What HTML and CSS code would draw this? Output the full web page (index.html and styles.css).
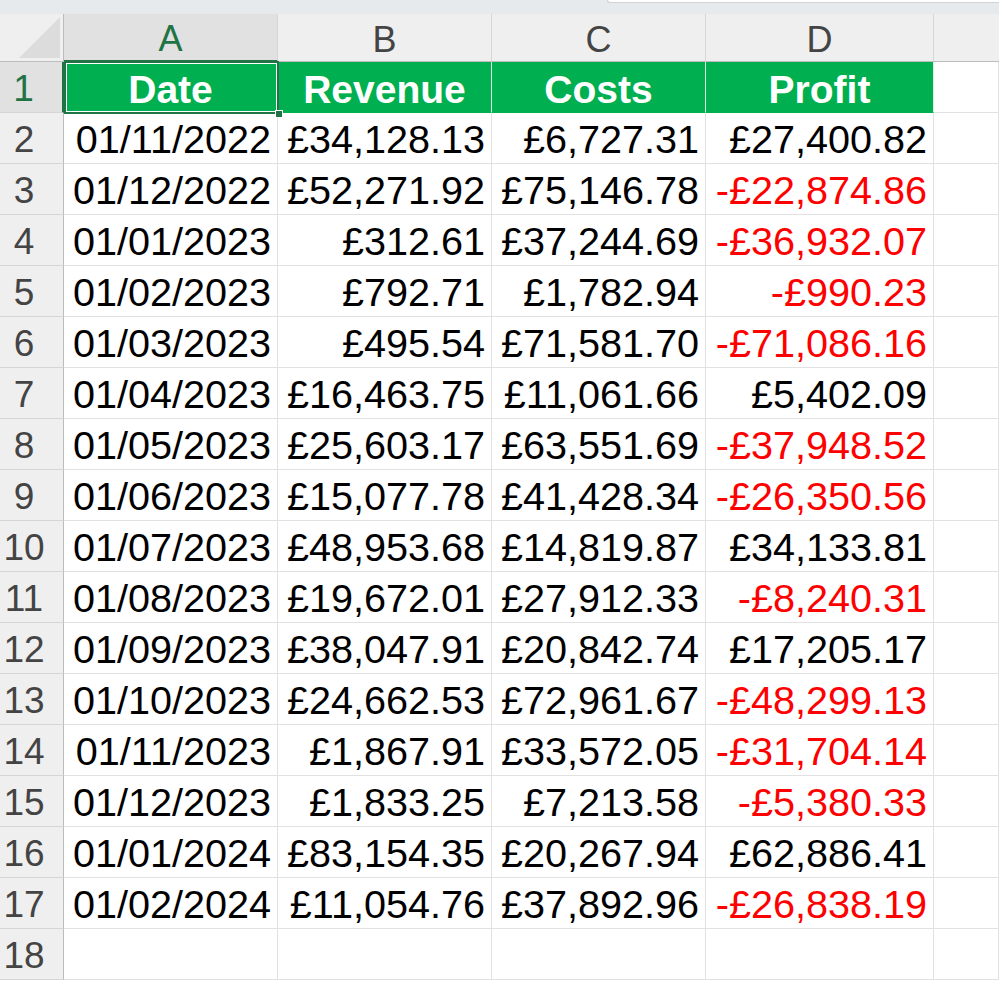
FILE: index.html
```html
<!DOCTYPE html>
<html>
<head>
<meta charset="utf-8">
<link rel="stylesheet" href="styles.css">
</head>
<body>
<div class="topbar"><div class="spacer"></div><div class="tab"></div></div>
<div class="sheet">
  <div class="corner"><div class="tri"></div></div>
  <div class="colh sel">A</div>
  <div class="colh">B</div>
  <div class="colh">C</div>
  <div class="colh">D</div>
  <div class="colh last"></div>

  <div class="rowh sel">1</div>
  <div class="cell hd">Date</div>
  <div class="cell hd">Revenue</div>
  <div class="cell hd">Costs</div>
  <div class="cell hd">Profit</div>
  <div class="cell"></div>

  <div class="rowh">2</div><div class="cell">01/11/2022</div><div class="cell">£34,128.13</div><div class="cell">£6,727.31</div><div class="cell">£27,400.82</div><div class="cell"></div>
  <div class="rowh">3</div><div class="cell">01/12/2022</div><div class="cell">£52,271.92</div><div class="cell">£75,146.78</div><div class="cell neg">-£22,874.86</div><div class="cell"></div>
  <div class="rowh">4</div><div class="cell">01/01/2023</div><div class="cell">£312.61</div><div class="cell">£37,244.69</div><div class="cell neg">-£36,932.07</div><div class="cell"></div>
  <div class="rowh">5</div><div class="cell">01/02/2023</div><div class="cell">£792.71</div><div class="cell">£1,782.94</div><div class="cell neg">-£990.23</div><div class="cell"></div>
  <div class="rowh">6</div><div class="cell">01/03/2023</div><div class="cell">£495.54</div><div class="cell">£71,581.70</div><div class="cell neg">-£71,086.16</div><div class="cell"></div>
  <div class="rowh">7</div><div class="cell">01/04/2023</div><div class="cell">£16,463.75</div><div class="cell">£11,061.66</div><div class="cell">£5,402.09</div><div class="cell"></div>
  <div class="rowh">8</div><div class="cell">01/05/2023</div><div class="cell">£25,603.17</div><div class="cell">£63,551.69</div><div class="cell neg">-£37,948.52</div><div class="cell"></div>
  <div class="rowh">9</div><div class="cell">01/06/2023</div><div class="cell">£15,077.78</div><div class="cell">£41,428.34</div><div class="cell neg">-£26,350.56</div><div class="cell"></div>
  <div class="rowh">10</div><div class="cell">01/07/2023</div><div class="cell">£48,953.68</div><div class="cell">£14,819.87</div><div class="cell">£34,133.81</div><div class="cell"></div>
  <div class="rowh">11</div><div class="cell">01/08/2023</div><div class="cell">£19,672.01</div><div class="cell">£27,912.33</div><div class="cell neg">-£8,240.31</div><div class="cell"></div>
  <div class="rowh">12</div><div class="cell">01/09/2023</div><div class="cell">£38,047.91</div><div class="cell">£20,842.74</div><div class="cell">£17,205.17</div><div class="cell"></div>
  <div class="rowh">13</div><div class="cell">01/10/2023</div><div class="cell">£24,662.53</div><div class="cell">£72,961.67</div><div class="cell neg">-£48,299.13</div><div class="cell"></div>
  <div class="rowh">14</div><div class="cell">01/11/2023</div><div class="cell">£1,867.91</div><div class="cell">£33,572.05</div><div class="cell neg">-£31,704.14</div><div class="cell"></div>
  <div class="rowh">15</div><div class="cell">01/12/2023</div><div class="cell">£1,833.25</div><div class="cell">£7,213.58</div><div class="cell neg">-£5,380.33</div><div class="cell"></div>
  <div class="rowh">16</div><div class="cell">01/01/2024</div><div class="cell">£83,154.35</div><div class="cell">£20,267.94</div><div class="cell">£62,886.41</div><div class="cell"></div>
  <div class="rowh">17</div><div class="cell">01/02/2024</div><div class="cell">£11,054.76</div><div class="cell">£37,892.96</div><div class="cell neg">-£26,838.19</div><div class="cell"></div>
  <div class="rowh">18</div><div class="cell"></div><div class="cell"></div><div class="cell"></div><div class="cell"></div><div class="cell"></div>

  <div class="selbox"><div class="handle"></div></div>
</div>
</body>
</html>
```
FILE: styles.css
```css
* { box-sizing: border-box; }
html, body { margin: 0; padding: 0; background: #fff; overflow: hidden; }
body { font-family: "Liberation Sans", Arial, sans-serif; width: 999px; height: 982px; }

.topbar { height: 14px; background: #e7eaed; display: flex; }
.spacer { width: 607px; }
.tab { flex: 1; height: 3px; background: #fff; border-left: 1px solid #cfd3d7; border-bottom: 1px solid #cfd3d7; border-bottom-left-radius: 4px; }

.sheet {
  position: relative;
  display: grid;
  grid-template-columns: 64px 214px 214px 214px 228px 65px;
  grid-template-rows: 48px repeat(18, 51px);
}

.corner { background: #efefef; border-right: 1px solid #bcbcbc; border-bottom: 1px solid #bcbcbc; position: relative; }
.tri { position: absolute; right: 3px; bottom: 3px; width: 0; height: 0; border-left: 41px solid transparent; border-bottom: 41px solid #dcdcdc; }

.colh {
  background: #efefef; color: #444; font-size: 36px;
  display: flex; align-items: center; justify-content: center;
  border-right: 1px solid #d6d6d6; border-bottom: 1px solid #bcbcbc;
  padding-top: 4px;
}
.colh.sel { background: #e1e1e1; color: #217346; border-bottom: 2px solid #217346; }
.colh.last { border-right: none; }

.rowh {
  background: #efefef; color: #444; font-size: 37px;
  display: flex; align-items: center; justify-content: center;
  padding-right: 15px; padding-top: 4px;
  border-right: 1px solid #bcbcbc; border-bottom: 1px solid #d6d6d6;
}
.rowh.sel { background: #e1e1e1; color: #217346; border-right: 2px solid #217346; }

.cell {
  font-size: 39.6px; color: #000;
  display: flex; align-items: center; justify-content: flex-end;
  padding-right: 6px; padding-top: 3px;
  border-right: 1px solid #e1e1e1; border-bottom: 1px solid #e1e1e1;
  white-space: nowrap;
}
.cell.hd { background: #00b050; color: #fff; font-weight: bold; font-size: 39px; justify-content: center; padding-right: 0; padding-top: 5px; border-right: 1px solid #d9f2e3; border-bottom-color: #00b050; }
.cell.neg { color: #ff0000; }

.selbox {
  position: absolute; left: 64px; top: 47px; width: 215px; height: 53px;
  border: 2px solid #217346; box-shadow: inset 0 0 0 1px #fff;
  pointer-events: none;
}
.handle { position: absolute; right: -6px; bottom: -6px; width: 8px; height: 8px; background: #217346; border: 1px solid #fff; }
```
